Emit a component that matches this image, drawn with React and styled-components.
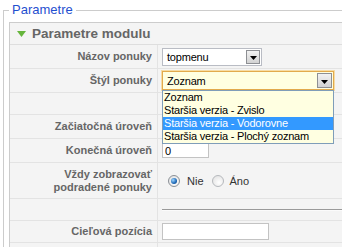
import React from "react";
import styled, { createGlobalStyle } from "styled-components";

const Global = createGlobalStyle`
  html, body { margin: 0; padding: 0; background: #fff; overflow: hidden; }
  body { font-family: "Liberation Sans", Arial, sans-serif; }
  * { box-sizing: border-box; }
`;

const Fieldset = styled.fieldset`
  margin: 2px 0 0 3px;
  padding: 4px 0 0 5px;
  border: 1px solid #cccccc;
  width: 440px;
  min-width: 0;
`;

const Legend = styled.legend`
  padding: 0 3px;
  font-size: 13px;
  line-height: 16px;
  color: #1f4fcf;
`;

const Panel = styled.div`
  border: 1px solid #cccccc;
  background: #f4f4f4;
`;

const PanelHeader = styled.h3`
  margin: 0;
  height: 22px;
  display: flex;
  align-items: center;
  gap: 6px;
  padding-left: 7px;
  border-bottom: 1px solid #dedede;
  font-size: 13.5px;
  font-weight: bold;
  color: #666;
`;

const Row = styled.div`
  display: grid;
  grid-template-columns: 148px 1fr;
  height: ${(p) => p.$h}px;
  border-bottom: 1px solid #e3e3e3;
`;

const Key = styled.div`
  display: flex;
  align-items: center;
  justify-content: flex-end;
  text-align: right;
  padding-right: 5px;
  border-right: 1px solid #e3e3e3;
  font-size: 11px;
  line-height: 13px;
  font-weight: bold;
  color: #666;
`;

const Value = styled.div`
  display: flex;
  align-items: center;
  padding-left: 4px;
  min-width: 0;
`;

const SelectWrap = styled.div`
  position: relative;
`;

const Select = styled.div`
  display: flex;
  align-items: stretch;
  width: ${(p) => p.$w}px;
  height: ${(p) => p.$h}px;
  padding: 1px 1px 1px 4px;
  background: ${(p) => (p.$focus ? "#ffffe1" : "#fff")};
  border: 1px solid ${(p) => (p.$focus ? "#e2aa4c" : "#b9bcc4")};
  box-shadow: ${(p) => (p.$focus ? "0 0 0 1px #f6dca5" : "none")};
  font-size: 11px;
  letter-spacing: -0.2px;
  color: #000;
`;

const SelectText = styled.span`
  flex: 1;
  display: flex;
  align-items: center;
`;

const ArrowBtn = styled.span`
  width: ${(p) => p.$w}px;
  display: flex;
  align-items: center;
  justify-content: center;
  padding-top: 2px;
  border: 1px solid #8d8f93;
  background: linear-gradient(#f2f2f2, #d2d2d2);
`;

const List = styled.ul`
  position: absolute;
  left: 0;
  top: 100%;
  width: 100%;
  margin: 0;
  padding: 0;
  list-style: none;
  border: 1px solid #7f9db9;
  background: #ffffe1;
  z-index: 2;
`;

const Item = styled.li`
  height: 13px;
  line-height: 13px;
  padding-left: 1px;
  font-size: 11px;
  letter-spacing: -0.2px;
  white-space: nowrap;
  color: ${(p) => (p.$active ? "#fff" : "#000")};
  background: ${(p) => (p.$active ? "#3399ff" : "transparent")};
`;

const TextInput = styled.input`
  width: ${(p) => p.$w}px;
  height: ${(p) => p.$h}px;
  margin: 0;
  padding: 0 2px;
  border: 1px solid #c3c3c3;
  background: #fff;
  font-family: "Liberation Sans", Arial, sans-serif;
  font-size: 11px;
  color: #000;
  outline: none;
`;

const RadioGroup = styled.div`
  display: flex;
  align-items: center;
  gap: 8px;
  padding-left: 6px;
`;

const RadioLabel = styled.label`
  display: flex;
  align-items: center;
  gap: ${(p) => p.$gap}px;
  font-size: 11px;
  color: #333;
`;

const Radio = styled.span`
  width: 12px;
  height: 12px;
  border-radius: 50%;
  border: 1px solid ${(p) => (p.$checked ? "#8b9096" : "#b6b9bd")};
  background: radial-gradient(circle at 60% 65%, #ffffff, #dedede);
  display: flex;
  align-items: center;
  justify-content: center;
  &::after {
    content: "";
    display: ${(p) => (p.$checked ? "block" : "none")};
    width: 6px;
    height: 6px;
    border-radius: 50%;
    background: radial-gradient(circle at 35% 35%, #9fd6ff, #1d67b5 60%, #0b3e7c);
  }
`;

const Rule = styled.div`
  flex: 1;
  height: 2px;
  border-top: 1px solid #9a9a9a;
  border-bottom: 1px solid #fbfbfb;
`;

const Triangle = () => (
  <svg width="9" height="6" viewBox="0 0 9 6">
    <polygon points="0,0 9,0 4.5,6" fill="#66b53c" />
  </svg>
);

const Arrow = () => (
  <svg width="7" height="4" viewBox="0 0 7 4">
    <polygon points="0,0 7,0 3.5,4" fill="#000" />
  </svg>
);

const options = [
  "Zoznam",
  "Staršia verzia - Zvislo",
  "Staršia verzia - Vodorovne",
  "Staršia verzia - Plochý zoznam",
];

export default function App() {
  return (
    <>
      <Global />
      <Fieldset>
        <Legend>Parametre</Legend>
        <Panel>
          <PanelHeader>
            <Triangle />
            Parametre modulu
          </PanelHeader>
          <Row $h={24}>
            <Key>Názov ponuky</Key>
            <Value>
              <Select $w={100} $h={18}>
                <SelectText>topmenu</SelectText>
                <ArrowBtn $w={14}>
                  <Arrow />
                </ArrowBtn>
              </Select>
            </Value>
          </Row>
          <Row $h={24}>
            <Key>Štýl ponuky</Key>
            <Value>
              <SelectWrap>
                <Select $w={172} $h={19} $focus>
                  <SelectText>Zoznam</SelectText>
                  <ArrowBtn $w={15}>
                    <Arrow />
                  </ArrowBtn>
                </Select>
                <List>
                  {options.map((o, i) => (
                    <Item key={o} $active={i === 2}>
                      {o}
                    </Item>
                  ))}
                </List>
              </SelectWrap>
            </Value>
          </Row>
          <Row $h={22}>
            <Key />
            <Value />
          </Row>
          <Row $h={24}>
            <Key>Začiatočná úroveň</Key>
            <Value>
              <TextInput $w={47} $h={15} defaultValue="0" readOnly />
            </Value>
          </Row>
          <Row $h={24}>
            <Key>Konečná úroveň</Key>
            <Value>
              <TextInput $w={47} $h={15} defaultValue="0" readOnly />
            </Value>
          </Row>
          <Row $h={36}>
            <Key>
              Vždy zobrazovať
              <br />
              podradené ponuky
            </Key>
            <Value>
              <RadioGroup>
                <RadioLabel $gap={7}>
                  <Radio $checked />
                  Nie
                </RadioLabel>
                <RadioLabel $gap={6}>
                  <Radio />
                  Áno
                </RadioLabel>
              </RadioGroup>
            </Value>
          </Row>
          <Row $h={22}>
            <Key />
            <Value>
              <Rule />
            </Value>
          </Row>
          <Row $h={22}>
            <Key>Cieľová pozícia</Key>
            <Value>
              <TextInput $w={107} $h={17} defaultValue="" readOnly />
            </Value>
          </Row>
          <Row $h={22}>
            <Key />
            <Value />
          </Row>
        </Panel>
      </Fieldset>
    </>
  );
}
